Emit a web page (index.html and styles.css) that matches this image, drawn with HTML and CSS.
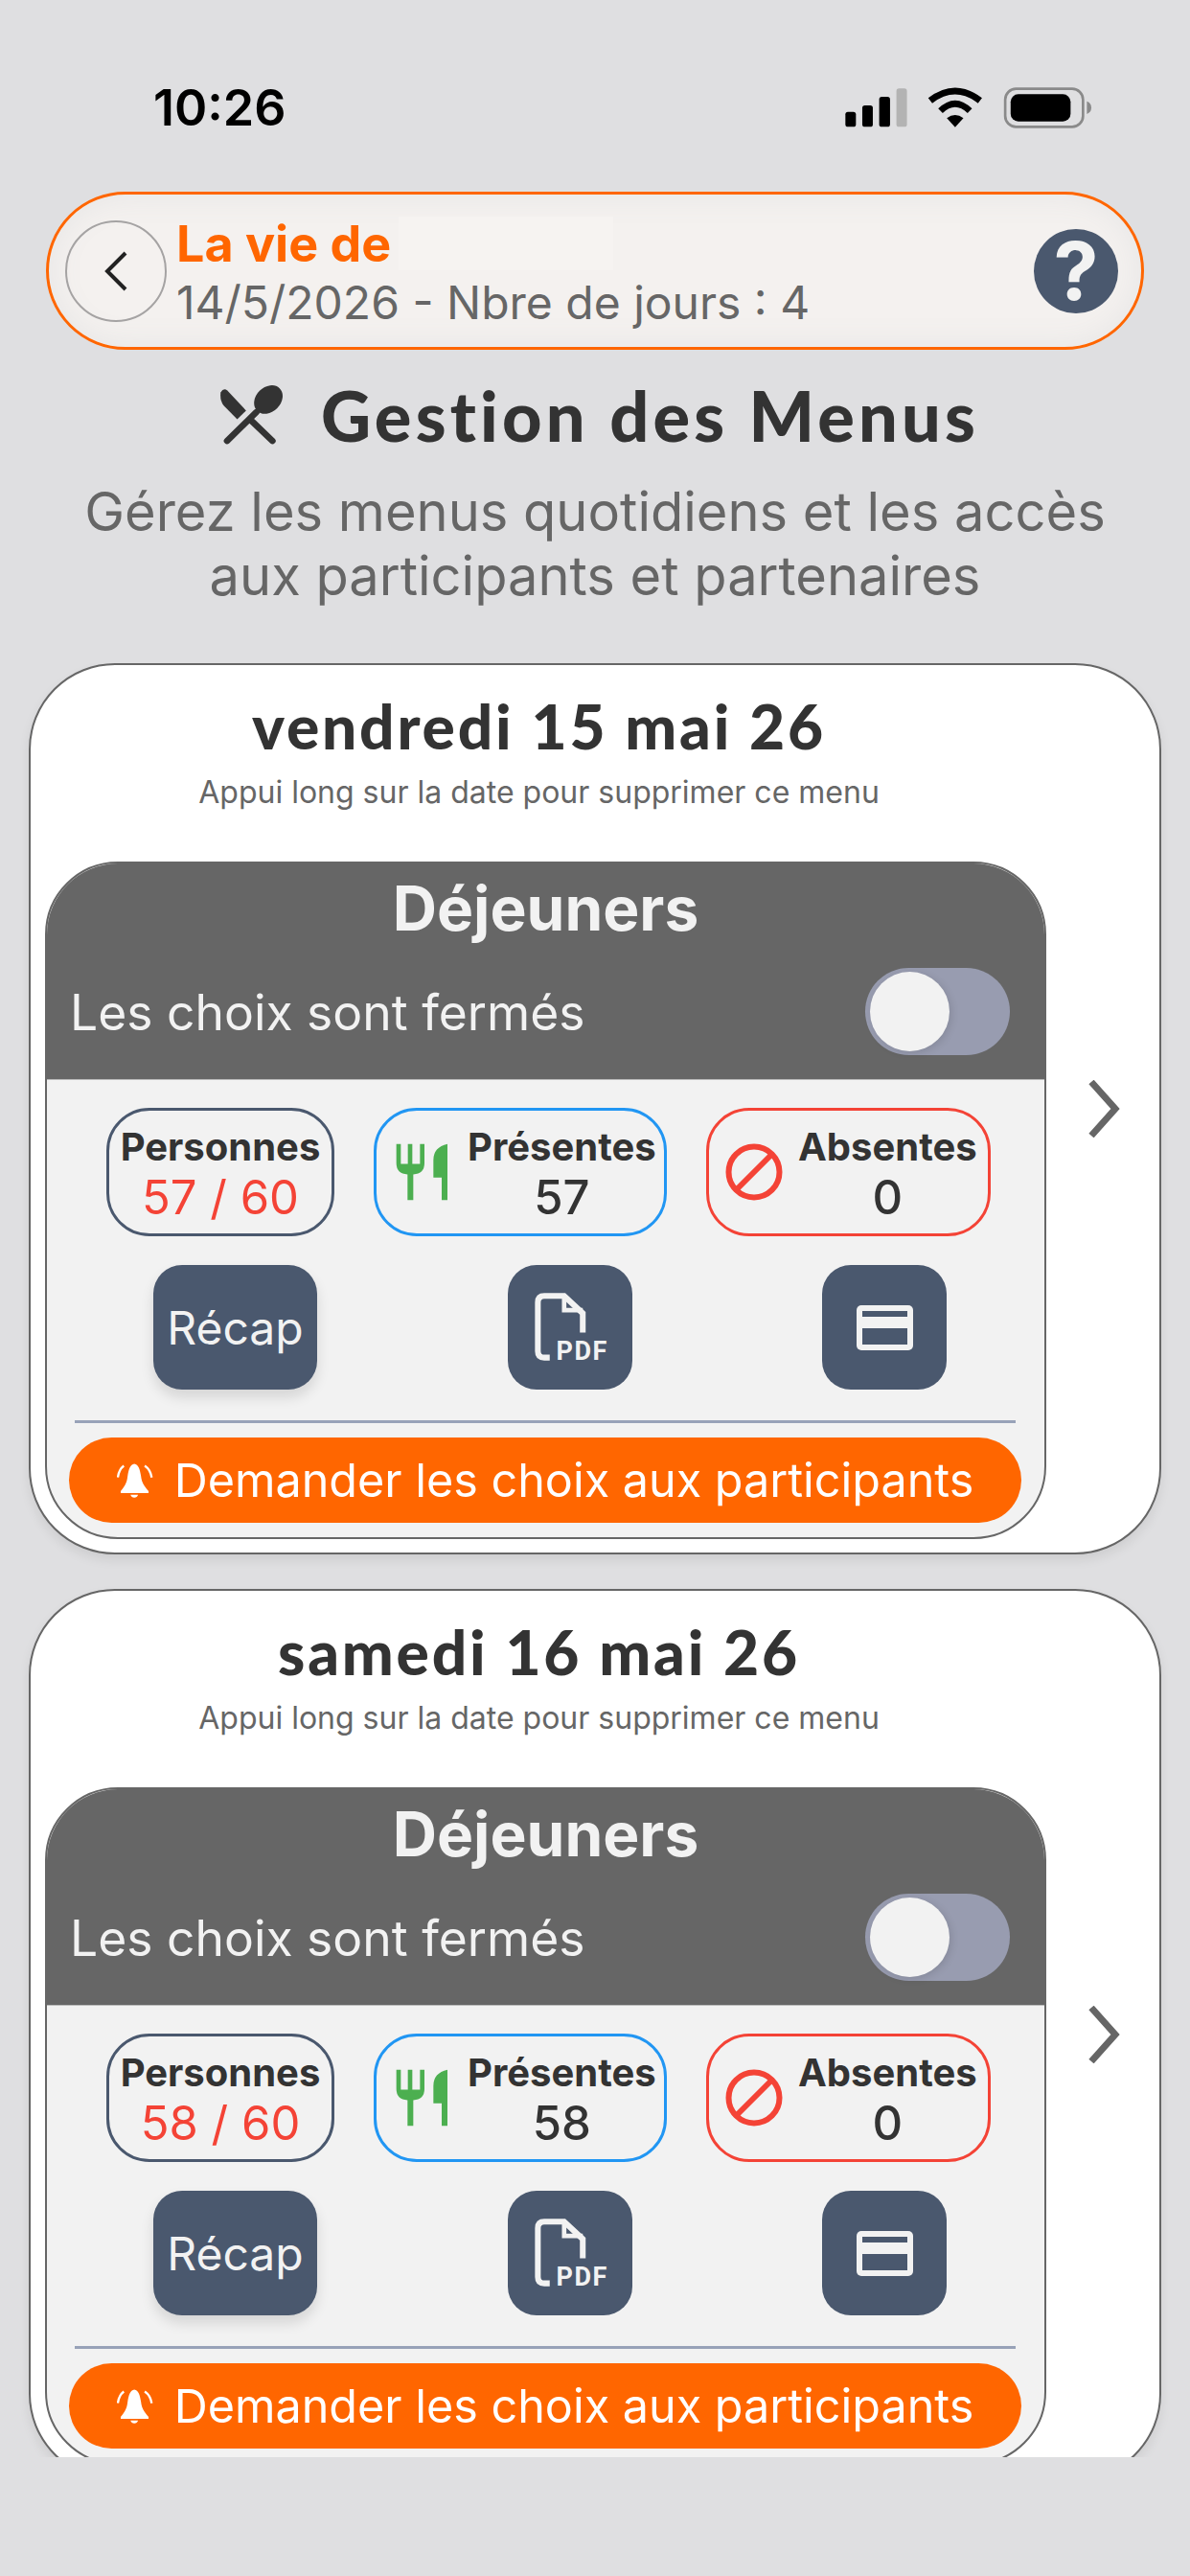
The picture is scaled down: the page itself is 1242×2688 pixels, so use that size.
FILE: index.html
```html
<!DOCTYPE html>
<html lang="fr">
<head>
    <meta charset="UTF-8">
    <meta name="viewport" content="width=device-width, initial-scale=1.0">
    <title>Gestion des Menus</title>
    <link rel="stylesheet" href="styles.css">
</head>
<body>
    <svg class="sprites" width="0" height="0">
        <symbol id="icon-cutlery" viewBox="100 160 165 185">
            <path d="M102 165h14v62h22v-62h14v62h24v-62h14v60q0 33-35 35v80h-18v-80q-35-2-35-35z"/>
            <path d="M262 165V340H244V270H218V215Q218 175 262 165Z"/>
        </symbol>
        <symbol id="icon-ban" viewBox="0 0 60 60">
            <circle cx="30" cy="30" r="26.5" fill="none" stroke="currentColor" stroke-width="6"/>
            <path d="M12 48L48 12" stroke="currentColor" stroke-width="6"/>
        </symbol>
        <symbol id="icon-pdf" viewBox="530 620 230 230">
            <path d="M583 828H566Q546 828 546 808V656Q546 636 566 636H628L686 690V750" fill="none" stroke="currentColor" stroke-width="18"/>
            <path d="M628 636V680H686" fill="none" stroke="currentColor" stroke-width="14"/>
        </symbol>
        <symbol id="icon-card" viewBox="0 0 59 47">
            <rect width="59" height="47" rx="5" fill="currentColor"/>
            <rect x="6" y="6" width="47" height="6" fill="#4a586e"/>
            <rect x="6" y="24" width="47" height="17" fill="#4a586e"/>
        </symbol>
        <symbol id="icon-bell" viewBox="70 108 115 114">
            <path d="M125 112C138 114 143 130 146 150C148 172 158 185 170 198V204H82V198C94 185 102 172 104 150C107 130 112 114 125 112Z" fill="#fff"/>
            <path d="M113 210H137Q134 219 125 219Q116 219 113 210Z" fill="#fff"/>
            <path d="M92 118Q76 130 73 155M158 118Q176 130 180 155" fill="none" stroke="#fff" stroke-width="7"/>
        </symbol>
        <symbol id="icon-next" viewBox="0 0 34 60">
            <path d="M4 2L29 30L4 58" fill="none" stroke="#666" stroke-width="7"/>
        </symbol>
    </svg>

    <div class="status-bar">
        <span class="status-time">10:26</span>
        <svg class="status-icons" width="263" height="45" viewBox="120 60 790 135">
            <rect x="127" y="140" width="33" height="47" rx="8"/>
            <rect x="180" y="120" width="33" height="67" rx="8"/>
            <rect x="233" y="93" width="34" height="94" rx="8"/>
            <rect x="287" y="67" width="33" height="120" rx="8" fill="#b3b3b3"/>
            <path d="M393 105Q471 45 549 105" fill="none" stroke="#000" stroke-width="21"/>
            <path d="M425 137Q471 92 517 137" fill="none" stroke="#000" stroke-width="20"/>
            <path d="M445 160Q471 140 497 160L471 188Z"/>
            <rect x="628" y="68" width="244" height="119" rx="34" fill="none" stroke="#8a8a8a" stroke-width="8"/>
            <rect x="645" y="85" width="188" height="85" rx="24"/>
            <path d="M884 107Q898 112 898 127Q898 142 884 147Z" fill="#8a8a8a"/>
        </svg>
    </div>

    <header class="topbar">
        <button class="back-btn">
            <svg width="26" height="42" viewBox="0 0 26 42"><path d="M23 2L4 21L23 40" fill="none" stroke="#222" stroke-width="4"/></svg>
        </button>
        <div class="topbar-text">
            <div class="topbar-title">La vie de</div>
            <div class="topbar-sub">14/5/2026 - Nbre de jours : 4</div>
        </div>
        <div class="name-patch"></div>
        <div class="help-btn">?</div>
    </header>

    <h1 class="page-title">
        <svg width="73" height="67" viewBox="90 60 220 200">
            <path d="M103 88Q112 72 124 82L183 145L155 172L112 128Q100 112 103 88Z" fill="#333"/>
            <path d="M195 172L266 240M215 150L123 240" fill="none" stroke="#333" stroke-width="20" stroke-linecap="round"/>
            <ellipse cx="253" cy="110" rx="50" ry="39" transform="rotate(-45 253 110)" fill="#333"/>
        </svg>
        <span>Gestion des Menus</span>
    </h1>
    <p class="page-sub">Gérez les menus quotidiens et les accès aux participants et partenaires</p>

    <main class="menu-list">
        <section class="day-card">
            <div class="day-main">
                <div class="day-head">
                    <h2 class="day-date">vendredi 15 mai 26</h2>
                    <div class="day-hint">Appui long sur la date pour supprimer ce menu</div>
                </div>
                <div class="meal-panel">
                    <div class="meal-head">
                        <h3 class="meal-name">Déjeuners</h3>
                        <div class="meal-row">
                            <span>Les choix sont fermés</span>
                            <div class="toggle"><div class="toggle-knob"></div></div>
                        </div>
                    </div>
                    <div class="meal-body">
                        <div class="stats">
                            <div class="stat stat-total">
                                <div class="stat-text"><b>Personnes</b><span class="stat-alert">57 / 60</span></div>
                            </div>
                            <div class="stat stat-here">
                                <svg class="icon-cutlery" width="55" height="62"><use href="#icon-cutlery"/></svg>
                                <div class="stat-text"><b>Présentes</b><span>57</span></div>
                            </div>
                            <div class="stat stat-away">
                                <svg class="icon-ban" width="60" height="60"><use href="#icon-ban"/></svg>
                                <div class="stat-text"><b>Absentes</b><span>0</span></div>
                            </div>
                        </div>
                        <div class="actions">
                            <div class="action action-recap">Récap</div>
                            <div class="action action-pdf">
                                <svg width="77" height="77"><use href="#icon-pdf"/></svg>
                                <span class="pdf-label">PDF</span>
                            </div>
                            <div class="action"><svg width="59" height="47"><use href="#icon-card"/></svg></div>
                        </div>
                        <div class="divider"></div>
                        <div class="ask-btn">
                            <svg width="38" height="38"><use href="#icon-bell"/></svg>
                            <span>Demander les choix aux participants</span>
                        </div>
                    </div>
                </div>
            </div>
            <svg class="next" width="34" height="60"><use href="#icon-next"/></svg>
        </section>

        <section class="day-card">
            <div class="day-main">
                <div class="day-head">
                    <h2 class="day-date">samedi 16 mai 26</h2>
                    <div class="day-hint">Appui long sur la date pour supprimer ce menu</div>
                </div>
                <div class="meal-panel">
                    <div class="meal-head">
                        <h3 class="meal-name">Déjeuners</h3>
                        <div class="meal-row">
                            <span>Les choix sont fermés</span>
                            <div class="toggle"><div class="toggle-knob"></div></div>
                        </div>
                    </div>
                    <div class="meal-body">
                        <div class="stats">
                            <div class="stat stat-total">
                                <div class="stat-text"><b>Personnes</b><span class="stat-alert">58 / 60</span></div>
                            </div>
                            <div class="stat stat-here">
                                <svg class="icon-cutlery" width="55" height="62"><use href="#icon-cutlery"/></svg>
                                <div class="stat-text"><b>Présentes</b><span>58</span></div>
                            </div>
                            <div class="stat stat-away">
                                <svg class="icon-ban" width="60" height="60"><use href="#icon-ban"/></svg>
                                <div class="stat-text"><b>Absentes</b><span>0</span></div>
                            </div>
                        </div>
                        <div class="actions">
                            <div class="action action-recap">Récap</div>
                            <div class="action action-pdf">
                                <svg width="77" height="77"><use href="#icon-pdf"/></svg>
                                <span class="pdf-label">PDF</span>
                            </div>
                            <div class="action"><svg width="59" height="47"><use href="#icon-card"/></svg></div>
                        </div>
                        <div class="divider"></div>
                        <div class="ask-btn">
                            <svg width="38" height="38"><use href="#icon-bell"/></svg>
                            <span>Demander les choix aux participants</span>
                        </div>
                    </div>
                </div>
            </div>
            <svg class="next" width="34" height="60"><use href="#icon-next"/></svg>
        </section>
    </main>
</body>
</html>
```

FILE: styles.css
```css
* {
    box-sizing: border-box;
}
body {
    margin: 0;
    height: 2688px;
    overflow: hidden;
    background-color: #dfdfe1;
    font-family: Inter, "Liberation Sans", sans-serif;
    color: #333;
}
.sprites {
    position: absolute;
}

/* status bar */
.status-bar {
    height: 200px;
    padding: 85px 99px 0 160px;
    display: flex;
    justify-content: space-between;
    align-items: flex-start;
}
.status-time {
    font-size: 52px;
    line-height: 56px;
    font-weight: 600;
    color: #000;
}
.status-icons {
    margin-top: 5px;
}

/* top bar */
.topbar {
    position: relative;
    height: 165px;
    margin: 0 48px;
    padding: 0 24px 0 17px;
    display: flex;
    align-items: center;
    border: 3px solid #ff6600;
    border-radius: 83px;
    background-color: #f4f1ef;
    box-shadow: inset 0 0 34px #e6e5e5;
}
.back-btn {
    width: 106px;
    height: 106px;
    padding: 0;
    flex-shrink: 0;
    display: flex;
    align-items: center;
    justify-content: center;
    background: none;
    border: 2px solid #a5a3a3;
    border-radius: 50%;
}
.topbar-text {
    flex: 1;
    margin-left: 10px;
    padding-top: 4px;
}
.topbar-title {
    font-size: 52px;
    line-height: 62px;
    font-weight: 700;
    color: #ff6600;
}
.topbar-sub {
    font-size: 48px;
    line-height: 60px;
    color: #666;
}
.name-patch {
    position: absolute;
    left: 365px;
    top: 23px;
    width: 224px;
    height: 56px;
    background-color: #f6f3f1;
}
.help-btn {
    width: 88px;
    height: 88px;
    flex-shrink: 0;
    display: flex;
    align-items: center;
    justify-content: center;
    border-radius: 50%;
    background-color: #4a586e;
    color: #f2f2f2;
    font-size: 84px;
    line-height: 1;
    font-weight: 700;
}

/* page title */
.page-title {
    height: 80px;
    margin: 28px 0 0;
    padding-left: 6px;
    display: flex;
    align-items: center;
    justify-content: center;
    gap: 36px;
    font-family: Lato, sans-serif;
    font-size: 72px;
    font-weight: 900;
    letter-spacing: 4.2px;
    color: #333;
}
.page-sub {
    margin: 28px 0 0;
    padding: 0 80px;
    text-align: center;
    font-size: 56px;
    line-height: 67px;
    color: #666;
}

/* cards */
.menu-list {
    height: 1872px;
    margin-top: 57px;
    padding: 0 30px;
    overflow: hidden;
}
.day-card {
    height: 930px;
    margin-bottom: 36px;
    padding: 0 0 14px 15px;
    display: flex;
    align-items: center;
    border: 2px solid #666;
    border-radius: 90px;
    background-color: #fff;
    box-shadow: 0 6px 12px rgba(0, 0, 0, 0.08);
}
.day-main {
    width: 1045px;
    flex-shrink: 0;
}
.next {
    margin: 14px 0 0 43px;
}
.day-head {
    height: 205px;
    padding: 34px 14px 0 0;
    text-align: center;
}
.day-date {
    margin: 0;
    font-family: Lato, sans-serif;
    font-size: 64px;
    line-height: 60px;
    font-weight: 900;
    letter-spacing: 2.8px;
    color: #333;
}
.day-hint {
    margin-top: 19px;
    font-size: 32px;
    line-height: 40px;
    color: #666;
}

/* meal panel */
.meal-panel {
    height: 707px;
    border: 2px solid #666;
    border-radius: 76px;
    background-color: #f2f2f2;
    overflow: hidden;
}
.meal-head {
    height: 226px;
    padding-top: 12px;
    background-color: #666;
    color: #f2f2f2;
    border-bottom: 1px solid #bbb;
}
.meal-name {
    margin: 0;
    text-align: center;
    font-size: 64px;
    line-height: 70px;
    font-weight: 700;
}
.meal-row {
    margin-top: 27px;
    padding: 0 36px 0 24px;
    display: flex;
    align-items: center;
    justify-content: space-between;
    font-size: 51.6px;
}
.toggle {
    width: 151px;
    height: 91px;
    padding: 4px 5px;
    border-radius: 46px;
    background-color: #989cb0;
}
.toggle-knob {
    width: 83px;
    height: 83px;
    border-radius: 50%;
    background-color: #f2f2f2;
    box-shadow: 2px 2px 8px rgba(0, 0, 0, 0.12);
}
.meal-body {
    padding-top: 29px;
}

/* stats */
.stats {
    padding-left: 62px;
    display: flex;
    gap: 41px;
}
.stat {
    height: 134px;
    display: flex;
    align-items: center;
    justify-content: center;
    border: 3px solid;
    border-radius: 45px;
}
.stat-total {
    width: 238px;
    border-color: #4a586e;
}
.stat-here {
    width: 306px;
    padding-left: 20px;
    justify-content: flex-start;
    gap: 20px;
    border-color: #2196f3;
}
.stat-away {
    width: 297px;
    padding-left: 17px;
    justify-content: flex-start;
    gap: 16px;
    border-color: #f44336;
}
.stat-text {
    display: flex;
    flex-direction: column;
    align-items: center;
    font-size: 49px;
    line-height: 53px;
    font-weight: 500;
}
.stat-text b {
    font-size: 40px;
    font-weight: 700;
}
.stat-alert {
    color: #f44336;
    font-weight: 400;
}
.icon-cutlery {
    fill: #4caf50;
}
.icon-ban {
    color: #f44336;
}

/* action buttons */
.actions {
    margin-top: 30px;
    padding: 0 102px 0 111px;
    display: flex;
    justify-content: space-between;
}
.action {
    position: relative;
    width: 130px;
    height: 130px;
    display: flex;
    align-items: center;
    justify-content: center;
    border-radius: 30px;
    background-color: #4a586e;
    color: #f2f2f2;
}
.action-recap {
    width: 171px;
    font-size: 48px;
    box-shadow: 0 8px 14px rgba(0, 0, 0, 0.12);
}
.pdf-label {
    position: absolute;
    left: 51px;
    top: 74px;
    font-family: "Roboto", sans-serif;
    font-size: 27px;
    line-height: 32px;
    font-weight: 700;
    letter-spacing: 1.5px;
}
.divider {
    height: 3px;
    width: 982px;
    margin: 32px 0 0 29px;
    background-color: #98a2b8;
}
.ask-btn {
    width: 994px;
    height: 89px;
    margin: 15px 0 0 23px;
    display: flex;
    align-items: center;
    justify-content: center;
    gap: 22px;
    border-radius: 45px;
    background-color: #ff6600;
    color: #fff;
    font-size: 48.5px;
}
```
